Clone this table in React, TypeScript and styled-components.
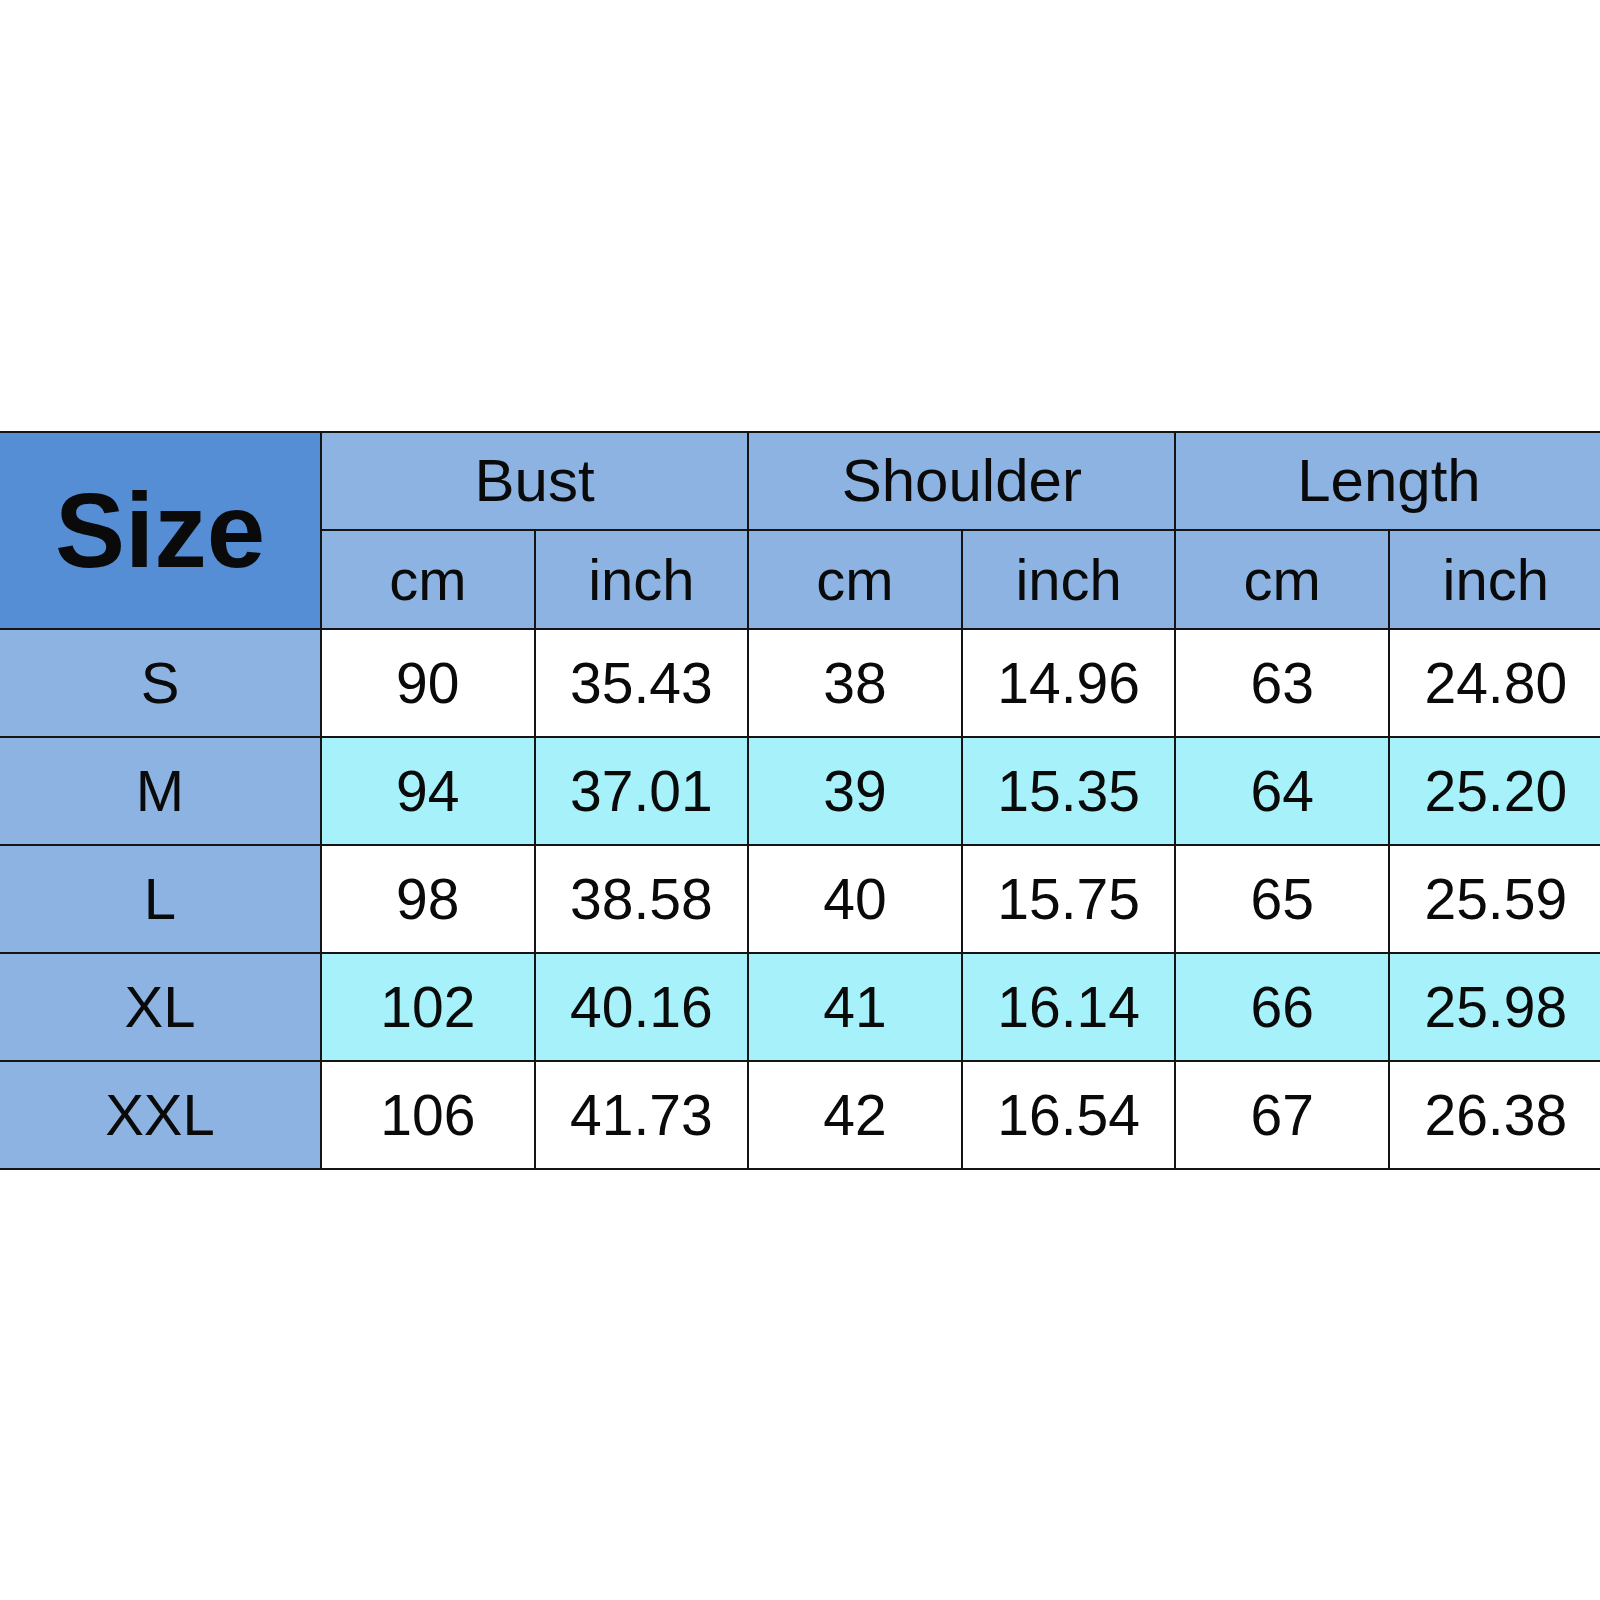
import styled, { createGlobalStyle } from 'styled-components';

const GlobalStyle = createGlobalStyle`
    html, body {
        margin: 0;
        padding: 0;
        background: #ffffff;
        overflow: hidden;
    }
`;

const Page = styled.div`
    width: 1600px;
    height: 1600px;
    padding-top: 431px;
    box-sizing: border-box;
    overflow: hidden;
    background: #ffffff;
    font-family: "Comic Sans MS", "Liberation Sans", Arial, sans-serif;
    color: #0a0a0a;
`;

const Chart = styled.div`
    display: grid;
    grid-template-columns: 320px repeat(6, 211.6px);
    grid-template-rows: 96px 97px repeat(5, 106px);
    gap: 2px;
    width: max-content;
    background: #141414;
    border-top: 2px solid #141414;
    border-bottom: 2px solid #141414;
`;

const Cell = styled.div<{ $bg: string; $size?: number; $bold?: boolean }>`
    display: flex;
    align-items: center;
    justify-content: center;
    background: ${p => p.$bg};
    font-size: ${p => p.$size ?? 57}px;
    font-weight: ${p => (p.$bold ? 700 : 400)};
    line-height: 1;
    white-space: nowrap;
`;

const SizeHead = styled(Cell)`
    grid-row: 1 / span 2;
    grid-column: 1;
`;

const GroupHead = styled(Cell)`
    grid-column: span 2;
`;

const HEAD = '#8db3e2';
const SIZE_HEAD = '#558ed5';
const CYAN = '#a6f1fa';
const WHITE = '#ffffff';

const groups = ['Bust', 'Shoulder', 'Length'];

const rows = [
    { size: 'S', values: ['90', '35.43', '38', '14.96', '63', '24.80'] },
    { size: 'M', values: ['94', '37.01', '39', '15.35', '64', '25.20'] },
    { size: 'L', values: ['98', '38.58', '40', '15.75', '65', '25.59'] },
    { size: 'XL', values: ['102', '40.16', '41', '16.14', '66', '25.98'] },
    { size: 'XXL', values: ['106', '41.73', '42', '16.54', '67', '26.38'] },
];

export default function App() {
    return (
        <>
            <GlobalStyle />
            <Page>
                <Chart>
                    <SizeHead $bg={SIZE_HEAD} $size={105} $bold>
                        Size
                    </SizeHead>
                    {groups.map(g => (
                        <GroupHead key={g} $bg={HEAD} $size={60}>
                            {g}
                        </GroupHead>
                    ))}
                    {groups.map(g => [
                        <Cell key={g + '-cm'} $bg={HEAD} $size={58}>
                            cm
                        </Cell>,
                        <Cell key={g + '-in'} $bg={HEAD} $size={58}>
                            inch
                        </Cell>,
                    ])}
                    {rows.map((row, i) => {
                        const bg = i % 2 === 1 ? CYAN : WHITE;
                        return [
                            <Cell key={row.size} $bg={HEAD} $size={58}>
                                {row.size}
                            </Cell>,
                            ...row.values.map((v, j) => (
                                <Cell key={row.size + j} $bg={bg}>
                                    {v}
                                </Cell>
                            )),
                        ];
                    })}
                </Chart>
            </Page>
        </>
    );
}
